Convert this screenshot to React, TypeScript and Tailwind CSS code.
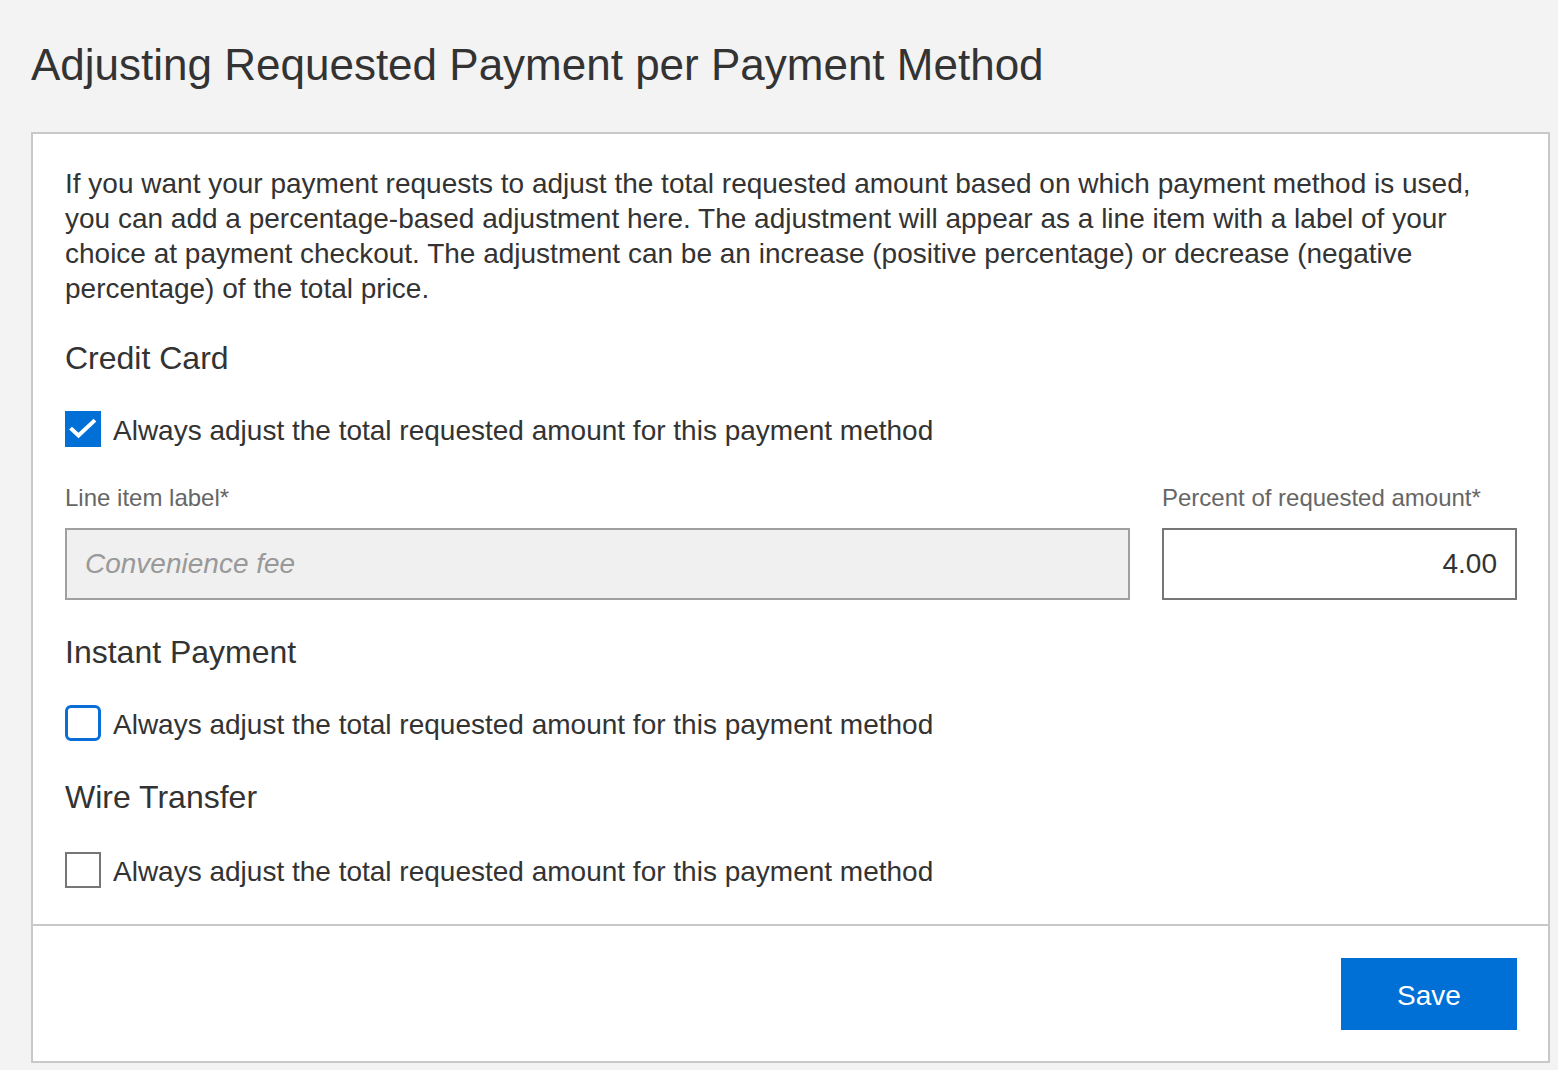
import React from 'react';

type BoxState = 'checked' | 'focused' | 'plain';

const CheckBox: React.FC<{ state: BoxState }> = ({ state }) => {
  if (state === 'checked') {
    return (
      <span className="flex h-[36px] w-[36px] shrink-0 items-center justify-center bg-[#0070d6]">
        <svg width="36" height="36" viewBox="0 0 36 36" fill="none">
          <path d="M7 18.5 L13.5 24.5 L28.5 10.5" stroke="white" strokeWidth="4" strokeLinecap="square" />
        </svg>
      </span>
    );
  }
  if (state === 'focused') {
    return <span className="block h-[36px] w-[36px] shrink-0 rounded-[6px] border-[3px] border-[#0a6ed6] bg-white" />;
  }
  return <span className="block h-[36px] w-[36px] shrink-0 border-2 border-[#767676] bg-white" />;
};

const CheckRow: React.FC<{ state: BoxState; className?: string }> = ({ state, className }) => (
  <label className={`flex h-[36px] items-center gap-[12px] ${className ?? ''}`}>
    <CheckBox state={state} />
    <span className="pt-[4px] text-[28px] leading-[36px] text-[#333]">
      Always adjust the total requested amount for this payment method
    </span>
  </label>
);

const Heading: React.FC<{ children: React.ReactNode; className?: string }> = ({ children, className }) => (
  <h3 className={`text-[32px] leading-[40px] text-[#333] ${className ?? ''}`}>{children}</h3>
);

export default function App() {
  return (
    <div className="min-h-[1070px] bg-[#f3f3f3] pb-[7px] font-['Liberation_Sans',Arial,sans-serif] text-[#333]">
      <h1 className="pl-[31px] pt-[38px] text-[44px] leading-[53px] text-[#333]">
        Adjusting Requested Payment per Payment Method
      </h1>

      <div className="ml-[31px] mt-[41px] w-[1519px] border-2 border-[#c8c8c8] bg-white">
        <div className="pb-[36px] pl-[32px] pr-[31px] pt-[32px]">
          <p className="text-[28px] leading-[35px] text-[#333]">
            If you want your payment requests to adjust the total requested amount based on which payment method is used,
            you can add a percentage-based adjustment here. The adjustment will appear as a line item with a label of your
            choice at payment checkout. The adjustment can be an increase (positive percentage) or decrease (negative
            percentage) of the total price.
          </p>

          <Heading className="mt-[32px]">Credit Card</Heading>
          <CheckRow state="checked" className="mt-[33px]" />

          <div className="mt-[32px] flex gap-[32px]">
            <div className="flex-1">
              <div className="pt-[3px] text-[24px] leading-[32px] text-[#666]">Line item label*</div>
              <input
                disabled
                placeholder="Convenience fee"
                className="mt-[14px] block h-[72px] w-full border-2 border-[#a0a0a0] bg-[#f0f0f0] px-[18px] text-[28px] italic text-[#333] placeholder:text-[#999]"
              />
            </div>
            <div className="w-[355px]">
              <div className="pt-[3px] text-[24px] leading-[32px] text-[#666]">Percent of requested amount*</div>
              <input
                readOnly
                value="4.00"
                className="mt-[14px] block h-[72px] w-full border-2 border-[#767676] bg-white px-[18px] text-right text-[28px] text-[#333] outline-none"
              />
            </div>
          </div>

          <Heading className="mt-[32px]">Instant Payment</Heading>
          <CheckRow state="focused" className="mt-[33px]" />

          <Heading className="mt-[36px]">Wire Transfer</Heading>
          <CheckRow state="plain" className="mt-[35px]" />
        </div>

        <div className="flex justify-end border-t-2 border-[#c8c8c8] pb-[31px] pl-[32px] pr-[31px] pt-[32px]">
          <button className="h-[72px] w-[176px] bg-[#0070d6] pt-[4px] text-[28px] text-white">Save</button>
        </div>
      </div>
    </div>
  );
}
